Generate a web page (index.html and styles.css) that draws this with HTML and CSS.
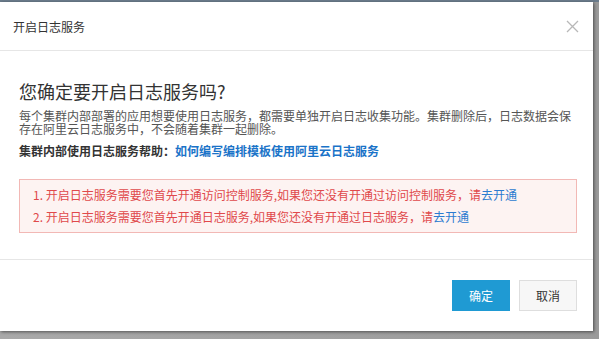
FILE: index.html
```html
<!DOCTYPE html>
<html lang="zh-CN">
<head>
  <meta charset="UTF-8">
  <title>开启日志服务</title>
  <link rel="stylesheet" href="styles.css">
</head>
<body>
  <div class="topbar"></div>
  <div class="dialog">
    <div class="dialog-header">
      <span class="dialog-title">开启日志服务</span>
      <svg class="close" width="13" height="13" viewBox="0 0 13 13">
        <path d="M1 1 L12 12 M12 1 L1 12" stroke="#b8b8b8" stroke-width="1.3" fill="none"/>
      </svg>
    </div>
    <div class="dialog-body">
      <h2>您确定要开启日志服务吗?</h2>
      <p class="desc">每个集群内部部署的应用想要使用日志服务，都需要单独开启日志收集功能。集群删除后，日志数据会保存在阿里云日志服务中，不会随着集群一起删除。</p>
      <p class="help">集群内部使用日志服务帮助：<a href="#">如何编写编排模板使用阿里云日志服务</a></p>
      <div class="alert">
        <div>1. 开启日志服务需要您首先开通访问控制服务,如果您还没有开通过访问控制服务，请<a href="#">去开通</a></div>
        <div>2. 开启日志服务需要您首先开通日志服务,如果您还没有开通过日志服务，请<a href="#">去开通</a></div>
      </div>
    </div>
    <div class="dialog-footer">
      <button class="btn btn-primary">确定</button>
      <button class="btn">取消</button>
    </div>
  </div>
</body>
</html>
```

FILE: styles.css
```css
* {
  margin: 0;
  padding: 0;
  box-sizing: border-box;
}

body {
  font-family: "Noto Sans CJK SC", "Liberation Sans", sans-serif;
  background: linear-gradient(to right, #a9a9a9, #9a9a9a);
  width: 599px;
  height: 339px;
  overflow: hidden;
}

.topbar {
  height: 2px;
  background: #6b7c8c;
}

.dialog {
  width: 593px;
  background: #fff;
  box-shadow: 1px 1px 3px rgba(0, 0, 0, 0.5);
}

.dialog-header {
  height: 49px;
  border-bottom: 1px solid #e6e6e6;
  display: flex;
  align-items: center;
  justify-content: space-between;
  padding: 0 14px 0 13px;
}

.dialog-title {
  font-size: 12px;
  color: #333;
}

.close {
  margin-top: 1px;
}

.dialog-body {
  padding: 28px 16px 26px 19px;
}

.dialog-body h2 {
  font-size: 18px;
  font-weight: normal;
  line-height: 24px;
  color: #333;
}

.desc {
  margin-top: 6px;
  font-size: 12px;
  line-height: 13px;
  color: #555;
  padding-right: 6px;
}

.help {
  margin-top: 7px;
  font-size: 12px;
  line-height: 18px;
  font-weight: bold;
  color: #333;
}

.help a {
  color: #1a73c8;
  text-decoration: none;
}

.alert {
  margin-top: 19px;
  background: #fdf3f2;
  border: 1px solid #f2b8b5;
  padding: 4px 13px;
  font-size: 12px;
  line-height: 22px;
  color: #e0494b;
}

.alert a {
  color: #2c7bd0;
  text-decoration: none;
}

.dialog-footer {
  border-top: 1px solid #e6e6e6;
  padding: 20px 16px 20px 0;
  display: flex;
  justify-content: flex-end;
  gap: 9px;
}

.btn {
  width: 58px;
  height: 31px;
  font-family: inherit;
  font-size: 12px;
  color: #333;
  background: #f7f7f7;
  border: 1px solid #dedede;
}

.btn-primary {
  background: #1f9ad3;
  border-color: #1f9ad3;
  color: #fff;
}
```
